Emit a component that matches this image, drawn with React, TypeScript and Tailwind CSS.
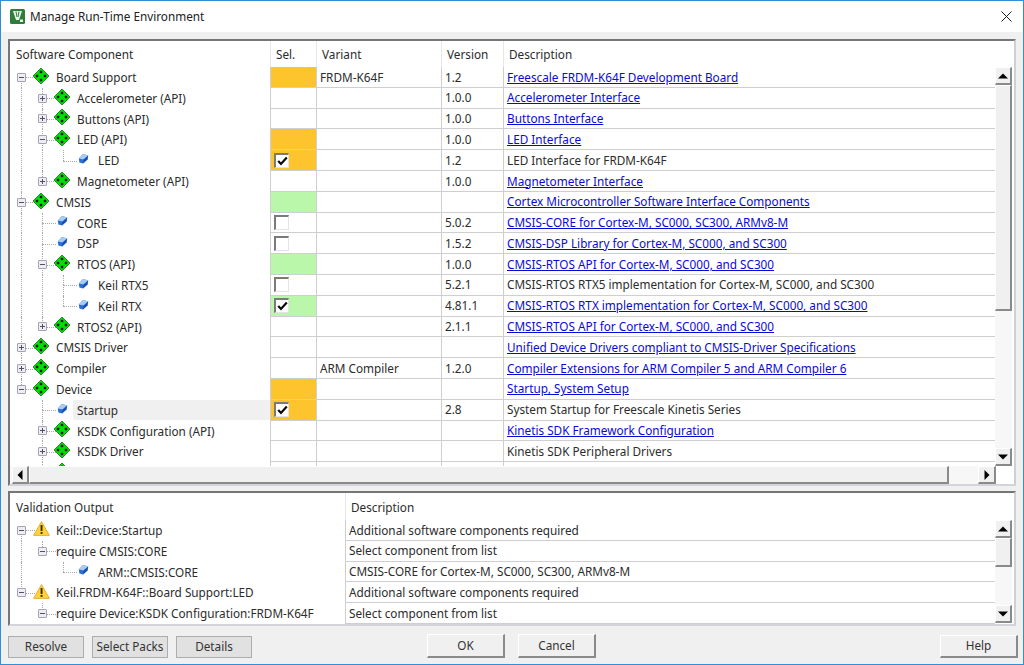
import React from 'react';

type Row = {
  depth: number;
  expander?: '+' | '-';
  icon?: 'pack' | 'comp' | 'warn';
  label?: string;
  sel?: 'orange' | 'green';
  check?: boolean | null;
  variant?: string;
  version?: string;
  desc?: string;
  link?: boolean;
  active?: boolean;
};

const softwareRows: Row[] = [
  { depth: 0, expander: '-', icon: 'pack', label: 'Board Support', sel: 'orange', variant: 'FRDM-K64F', version: '1.2', desc: 'Freescale FRDM-K64F Development Board', link: true },
  { depth: 1, expander: '+', icon: 'pack', label: 'Accelerometer (API)', version: '1.0.0', desc: 'Accelerometer Interface', link: true },
  { depth: 1, expander: '+', icon: 'pack', label: 'Buttons (API)', version: '1.0.0', desc: 'Buttons Interface', link: true },
  { depth: 1, expander: '-', icon: 'pack', label: 'LED (API)', sel: 'orange', version: '1.0.0', desc: 'LED Interface', link: true },
  { depth: 2, icon: 'comp', label: 'LED', sel: 'orange', check: true, version: '1.2', desc: 'LED Interface for FRDM-K64F' },
  { depth: 1, expander: '+', icon: 'pack', label: 'Magnetometer (API)', version: '1.0.0', desc: 'Magnetometer Interface', link: true },
  { depth: 0, expander: '-', icon: 'pack', label: 'CMSIS', sel: 'green', desc: 'Cortex Microcontroller Software Interface Components', link: true },
  { depth: 1, icon: 'comp', label: 'CORE', check: false, version: '5.0.2', desc: 'CMSIS-CORE for Cortex-M, SC000, SC300, ARMv8-M', link: true },
  { depth: 1, icon: 'comp', label: 'DSP', check: false, version: '1.5.2', desc: 'CMSIS-DSP Library for Cortex-M, SC000, and SC300', link: true },
  { depth: 1, expander: '-', icon: 'pack', label: 'RTOS (API)', sel: 'green', version: '1.0.0', desc: 'CMSIS-RTOS API for Cortex-M, SC000, and SC300', link: true },
  { depth: 2, icon: 'comp', label: 'Keil RTX5', check: false, version: '5.2.1', desc: 'CMSIS-RTOS RTX5 implementation for Cortex-M, SC000, and SC300' },
  { depth: 2, icon: 'comp', label: 'Keil RTX', sel: 'green', check: true, version: '4.81.1', desc: 'CMSIS-RTOS RTX implementation for Cortex-M, SC000, and SC300', link: true },
  { depth: 1, expander: '+', icon: 'pack', label: 'RTOS2 (API)', version: '2.1.1', desc: 'CMSIS-RTOS API for Cortex-M, SC000, and SC300', link: true },
  { depth: 0, expander: '+', icon: 'pack', label: 'CMSIS Driver', desc: 'Unified Device Drivers compliant to CMSIS-Driver Specifications', link: true },
  { depth: 0, expander: '+', icon: 'pack', label: 'Compiler', variant: 'ARM Compiler', version: '1.2.0', desc: 'Compiler Extensions for ARM Compiler 5 and ARM Compiler 6', link: true },
  { depth: 0, expander: '-', icon: 'pack', label: 'Device', sel: 'orange', desc: 'Startup, System Setup', link: true },
  { depth: 1, icon: 'comp', label: 'Startup', sel: 'orange', check: true, version: '2.8', desc: 'System Startup for Freescale Kinetis Series', active: true },
  { depth: 1, expander: '+', icon: 'pack', label: 'KSDK Configuration (API)', desc: 'Kinetis SDK Framework Configuration', link: true },
  { depth: 1, expander: '+', icon: 'pack', label: 'KSDK Driver', desc: 'Kinetis SDK Peripheral Drivers' },
  { depth: 1, icon: 'pack' },
];

const validationRows: Row[] = [
  { depth: 0, expander: '-', icon: 'warn', label: 'Keil::Device:Startup', desc: 'Additional software components required' },
  { depth: 1, expander: '-', label: 'require CMSIS:CORE', desc: 'Select component from list' },
  { depth: 2, icon: 'comp', label: 'ARM::CMSIS:CORE', desc: 'CMSIS-CORE for Cortex-M, SC000, SC300, ARMv8-M' },
  { depth: 0, expander: '-', icon: 'warn', label: 'Keil.FRDM-K64F::Board Support:LED', desc: 'Additional software components required' },
  { depth: 1, expander: '-', label: 'require Device:KSDK Configuration:FRDM-K64F', desc: 'Select component from list' },
];

// true when the tree line of level k carries on below row i
const lineContinues = (rows: Row[], i: number, k: number) => {
  for (let j = i + 1; j < rows.length; j++) {
    if (rows[j].depth < k) return false;
    if (rows[j].depth === k) return true;
  }
  return false;
};

const PackIcon = () => (
  <svg width="16" height="16" viewBox="0 0 16 16" className="block -mt-[3px]">
    <polygon points="8,0 16,8 8,16 0,8" fill="#00e000" stroke="#0a5a0a" strokeWidth="0.7" />
    <rect x="6.8" y="2.8" width="2.4" height="2.4" fill="#0c0c0c" />
    <rect x="2.8" y="6.8" width="2.4" height="2.4" fill="#0c0c0c" />
    <rect x="10.8" y="6.8" width="2.4" height="2.4" fill="#0c0c0c" />
    <rect x="6.8" y="10.8" width="2.4" height="2.4" fill="#0c0c0c" />
  </svg>
);

const CompIcon = () => (
  <svg width="11" height="11" viewBox="0 0 11 11" className="block -mt-[4px]">
    <polygon points="0.8,5.5 5,1 10.2,2.4 9.4,6.4 5,10.6 1.4,9.4" fill="#2a6fd6" />
    <polygon points="0.8,5.5 5,1 10.2,2.4 5.6,6.4" fill="#a8ccf5" />
    <polygon points="5.6,6.4 10.2,2.4 9.4,6.4 5,10.6" fill="#1a4fb0" />
  </svg>
);

const WarnIcon = () => (
  <svg width="17" height="15" viewBox="0 0 17 15" className="block -mt-[3px]">
    <path d="M8.5 0.6 L16.4 14.4 H0.6 Z" fill="#ffd23c" stroke="#d9a520" strokeWidth="0.8" strokeLinejoin="round" />
    <rect x="7.6" y="4" width="1.9" height="6" fill="#3a2c00" />
    <rect x="7.6" y="11" width="1.9" height="1.9" fill="#3a2c00" />
  </svg>
);

const Expander = ({ kind }: { kind: '+' | '-' }) => (
  <span className="relative z-10 flex h-[9px] w-[9px] items-center justify-center rounded-[1px] border border-[#a4a4b4] bg-[#eeeef2]">
    <span className="absolute h-px w-[5px] bg-[#50506a]" />
    {kind === '+' && <span className="absolute h-[5px] w-px bg-[#50506a]" />}
  </span>
);

const Checkbox = ({ checked }: { checked: boolean }) => (
  <span className="flex h-[15px] w-[15px] items-center justify-center border-t-2 border-l-2 border-[#7a7a7a] border-r border-b border-r-[#e4e4e4] border-b-[#e4e4e4] bg-white">
    {checked && (
      <svg width="11" height="10" viewBox="0 0 11 10">
        <path d="M1.2 5 L4 8 L9.8 1.6" fill="none" stroke="#0a0a0a" strokeWidth="2.2" />
      </svg>
    )}
  </span>
);

const TreeCell = ({ rows, index }: { rows: Row[]; index: number }) => {
  const row = rows[index];
  const ancestors = Array.from({ length: row.depth }, (_, k) => k);
  return (
    <div className="flex h-full items-center pl-px">
      {ancestors.map((k) => (
        <div key={k} className="flex h-full w-[21px] flex-none justify-center">
          {lineContinues(rows, index, k) && <span className="h-full border-l border-dotted border-[#a8a8a8]" />}
        </div>
      ))}
      <div className="relative flex h-full w-[21px] flex-none items-center justify-center">
        {index > 0 && <span className="absolute left-[10px] top-0 h-1/2 border-l border-dotted border-[#a8a8a8]" />}
        {lineContinues(rows, index, row.depth) && (
          <span className="absolute bottom-0 left-[10px] h-1/2 border-l border-dotted border-[#a8a8a8]" />
        )}
        <span className="absolute left-[10px] top-1/2 w-[14px] border-t border-dotted border-[#a8a8a8]" />
        {row.expander && <Expander kind={row.expander} />}
      </div>
      {row.icon && (
        <div className="relative z-10 flex w-[18px] flex-none justify-center">
          {row.icon === 'pack' && <PackIcon />}
          {row.icon === 'comp' && <CompIcon />}
          {row.icon === 'warn' && <WarnIcon />}
        </div>
      )}
      <div
        className={`flex h-[20px] flex-1 items-center whitespace-nowrap pt-px ${row.icon ? 'ml-[2px] pl-[4px]' : 'ml-[3px]'} ${row.active ? 'bg-[#f0f0f0]' : ''}`}
      >
        {row.label}
      </div>
    </div>
  );
};

const Arrow = ({ dir }: { dir: 'up' | 'down' | 'left' | 'right' }) => {
  const points = {
    up: '0,6 5,1 10,6',
    down: '0,1 5,6 10,1',
    left: '6,0 1,5 6,10',
    right: '1,0 6,5 1,10',
  }[dir];
  return (
    <svg width="10" height="10" viewBox={dir === 'up' || dir === 'down' ? '0 -1.5 10 10' : '-1.5 0 10 10'}>
      <polygon points={points} fill="#000" />
    </svg>
  );
};

const raised =
  'border-t border-l border-t-white border-l-white border-r-2 border-b-2 border-r-[#8a8a8a] border-b-[#8a8a8a] bg-[#f0f0f0]';

const VScrollbar = ({ thumb }: { thumb: string }) => (
  <div className="flex h-full w-[17px] flex-none flex-col bg-[#f7f7f7]">
    <div className={`flex h-[18px] flex-none items-center justify-center ${raised}`}>
      <Arrow dir="up" />
    </div>
    <div className={`${thumb} flex-none ${raised}`} />
    <div className="flex-1" />
    <div className={`flex h-[18px] flex-none items-center justify-center ${raised}`}>
      <Arrow dir="down" />
    </div>
  </div>
);

const HScrollbar = () => (
  <div className="flex h-[18px] flex-none bg-[#f7f7f7] pl-[2px]">
    <div className={`flex w-[17px] flex-none items-center justify-center ${raised}`}>
      <Arrow dir="left" />
    </div>
    <div className={`w-[920px] flex-none ${raised}`} />
    <div className="flex-1" />
    <div className={`flex w-[18px] flex-none items-center justify-center ${raised}`}>
      <Arrow dir="right" />
    </div>
    <div className="w-[18px] flex-none bg-white" />
  </div>
);

const cellLine = 'border-r border-b border-[#cfcfcf]';

const selColor = { orange: 'bg-[#fdc42d]', green: 'bg-[#bbf7ab]' };

const SoftwarePanel = () => (
  <section className="mx-[7px] mt-[7px] flex h-[447px] flex-none flex-col border-t-2 border-l-2 border-t-[#767676] border-l-[#767676] border-r-2 border-b-2 border-r-[#d0d0d0] border-b-[#d4d4dc] bg-white">
    <div className="flex h-[425px] flex-none">
      <div className="min-w-0 flex-1 overflow-hidden">
        <div className="flex h-[26px] items-center">
          <div className="w-[260px] flex-none pl-[6px] pt-[2px]">Software Component</div>
          <div className="flex h-full w-[47px] flex-none items-center border-x border-[#e8e8e8] pl-[5px] pt-[2px]">Sel.</div>
          <div className="flex h-full w-[125px] flex-none items-center border-r border-[#e8e8e8] pl-[5px] pt-[2px]">Variant</div>
          <div className="flex h-full w-[62px] flex-none items-center border-r border-[#e8e8e8] pl-[5px] pt-[2px]">Version</div>
          <div className="flex-1 pl-[5px] pt-[2px]">Description</div>
        </div>
        {softwareRows.map((row, i) => (
          <div key={i} className="flex h-[20.8px] flex-none items-center">
            <div className="h-full w-[260px] flex-none">
              <TreeCell rows={softwareRows} index={i} />
            </div>
            <div className={`flex h-full w-[47px] flex-none items-center border-l pl-[3px] ${cellLine} ${row.sel ? selColor[row.sel] : ''}`}>
              {row.check !== undefined && row.check !== null && <Checkbox checked={row.check} />}
            </div>
            <div className={`flex h-full w-[125px] flex-none items-center pl-[3px] pt-px ${cellLine}`}>{row.variant}</div>
            <div className={`flex h-full w-[62px] flex-none items-center pl-[3px] pt-px ${cellLine}`}>{row.version}</div>
            <div className="flex h-full flex-1 items-center whitespace-nowrap border-b border-[#cfcfcf] pl-[3px] pt-px">
              {row.link ? <a className="text-[#0a0ad8] underline">{row.desc}</a> : row.desc}
            </div>
          </div>
        ))}
      </div>
      <div className="mr-[2px] flex-none pt-[26px]">
        <VScrollbar thumb="h-[226px]" />
      </div>
    </div>
    <HScrollbar />
  </section>
);

const ValidationPanel = () => (
  <section className="mx-[7px] mt-[5px] flex h-[135px] flex-none border-t-2 border-l-2 border-t-[#767676] border-l-[#767676] border-r-2 border-b-2 border-r-[#d0d0d0] border-b-[#d4d4dc] bg-white">
    <div className="min-w-0 flex-1 overflow-hidden">
      <div className="flex h-[27px] items-center">
        <div className="w-[335px] flex-none pl-[6px] pt-[3px]">Validation Output</div>
        <div className="flex h-full flex-1 items-center border-l border-[#e8e8e8] pl-[5px] pt-[3px]">Description</div>
      </div>
      {validationRows.map((row, i) => (
        <div key={i} className="flex h-[20.8px] items-center">
          <div className="h-full w-[335px] flex-none">
            <TreeCell rows={validationRows} index={i} />
          </div>
          <div className="flex h-full flex-1 items-center border-b border-l border-[#cfcfcf] pl-[3px] pt-px">{row.desc}</div>
        </div>
      ))}
    </div>
    <div className="mr-[2px] h-[103px] flex-none pt-[27px] box-content">
      <VScrollbar thumb="h-[29px]" />
    </div>
  </section>
);

const DialogButton = ({ label, size }: { label: string; size: 'flat' | 'main' | 'help' }) => (
  <button
    className={`flex items-center justify-center text-[#333] ${
      size === 'flat'
        ? `mt-px h-[22px] w-[76px] border border-[#adadad] bg-[#e1e1e1]`
        : size === 'main'
          ? `-mt-px h-[24px] w-[78px] ${raised}`
          : `h-[23px] w-[78px] ${raised}`
    }`}
  >
    {label}
  </button>
);

export default function App() {
  return (
    <div className="flex h-[665px] w-[1024px] flex-col overflow-hidden border border-[#2f8fd8] bg-[#f0f0f0] font-['Noto_Sans','Open_Sans',sans-serif] text-[11.75px] leading-none text-[#2c2c2c]">
      <header className="flex h-[31px] flex-none items-center bg-white pl-[9px] pr-[11px]">
        <svg width="15" height="15" viewBox="0 0 15 15" className="mr-[5px] flex-none">
          <rect width="15" height="15" rx="1.5" fill="#2f7d3a" />
          <path d="M3 2 H12 L9 11 H6 Z" fill="#e8f3e8" />
          <path d="M6 2.5 L7 8 M9 2.5 L8 8" stroke="#2f7d3a" strokeWidth="1" />
          <rect x="10" y="10.5" width="3" height="2.5" fill="#e8f3e8" />
        </svg>
        <span className="flex-1 text-[#222]">Manage Run-Time Environment</span>
        <svg width="11" height="11" viewBox="0 0 11 11">
          <path d="M0.5 0.5 L10.5 10.5 M10.5 0.5 L0.5 10.5" stroke="#222" strokeWidth="1" />
        </svg>
      </header>
      <SoftwarePanel />
      <ValidationPanel />
      <footer className="flex flex-1 items-start pl-[7px] pr-[5px] pt-[9px]">
        <div className="flex items-start gap-[8px]">
          <DialogButton label="Resolve" size="flat" />
          <DialogButton label="Select Packs" size="flat" />
          <DialogButton label="Details" size="flat" />
        </div>
        <div className="ml-[175px] flex items-start gap-[13px]">
          <DialogButton label="OK" size="main" />
          <DialogButton label="Cancel" size="main" />
        </div>
        <div className="ml-auto">
          <DialogButton label="Help" size="help" />
        </div>
      </footer>
    </div>
  );
}
